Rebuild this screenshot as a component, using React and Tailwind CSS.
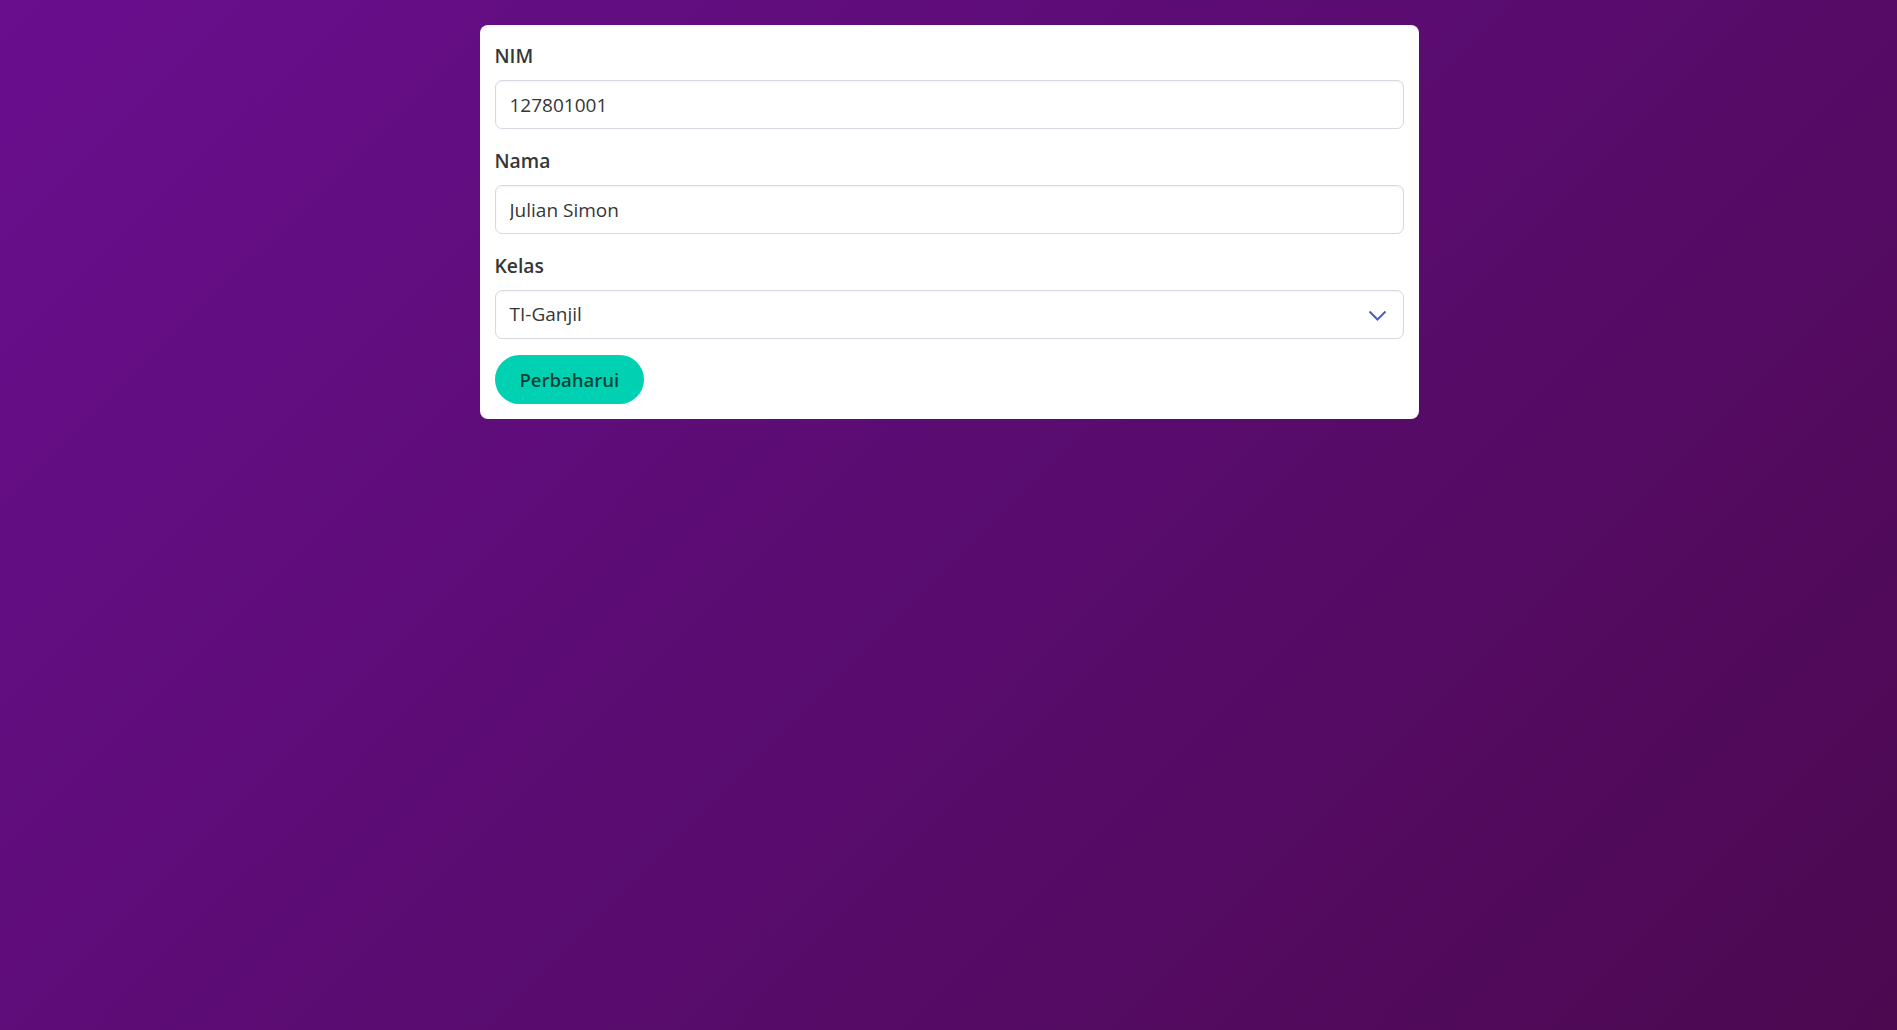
export default function App() {
  const font = { fontFamily: '"Open Sans", "Noto Sans", sans-serif' };
  return (
    <div
      className="min-h-[1030px] w-full bg-[linear-gradient(135deg,#690e8e_0%,#5a0c70_50%,#4c0950_100%)] pt-[25px] pl-[1px]"
      style={font}
    >
      <div className="mx-auto w-[939px] rounded-[8px] bg-white px-[15px] pt-[16px] pb-[15px]">
        <form className="flex flex-col" onSubmit={(e) => e.preventDefault()}>
          <div className="mb-[17px]">
            <label className="mb-[10px] block text-[19.3px] leading-[29px] font-semibold text-[#363636]">NIM</label>
            <input
              className="block h-[49px] w-full rounded-[7px] border border-[#d6d9e1] bg-white pl-[14px] text-[19px] text-[#363636] shadow-[inset_0_1px_2px_rgba(10,10,10,0.05)] outline-none"
              defaultValue="127801001"
            />
          </div>
          <div className="mb-[17px]">
            <label className="mb-[10px] block text-[19.3px] leading-[29px] font-semibold text-[#363636]">Nama</label>
            <input
              className="block h-[49px] w-full rounded-[7px] border border-[#d6d9e1] bg-white pl-[14px] text-[19px] text-[#363636] shadow-[inset_0_1px_2px_rgba(10,10,10,0.05)] outline-none"
              defaultValue="Julian Simon"
            />
          </div>
          <div className="mb-[16px]">
            <label className="mb-[10px] block text-[19.3px] leading-[29px] font-semibold text-[#363636]">Kelas</label>
            <div className="relative">
              <div className="flex h-[49px] w-full items-center rounded-[7px] border border-[#d6d9e1] bg-white pl-[14px] text-[19px] text-[#363636] shadow-[inset_0_1px_2px_rgba(10,10,10,0.05)]">
                TI-Ganjil
              </div>
              <svg
                className="absolute right-[17px] top-[20px]"
                width="19"
                height="12"
                viewBox="0 0 19 12"
                fill="none"
              >
                <path d="M1.5 1.5 L9.5 9.5 L17.5 1.5" stroke="#485fc7" strokeWidth="2" />
              </svg>
            </div>
          </div>
          <div>
            <button
              type="submit"
              className="h-[49px] rounded-full bg-[#00d1b2] px-[25px] text-[18.5px] font-semibold text-[rgba(0,0,0,0.7)]"
            >
              Perbaharui
            </button>
          </div>
        </form>
      </div>
    </div>
  );
}
